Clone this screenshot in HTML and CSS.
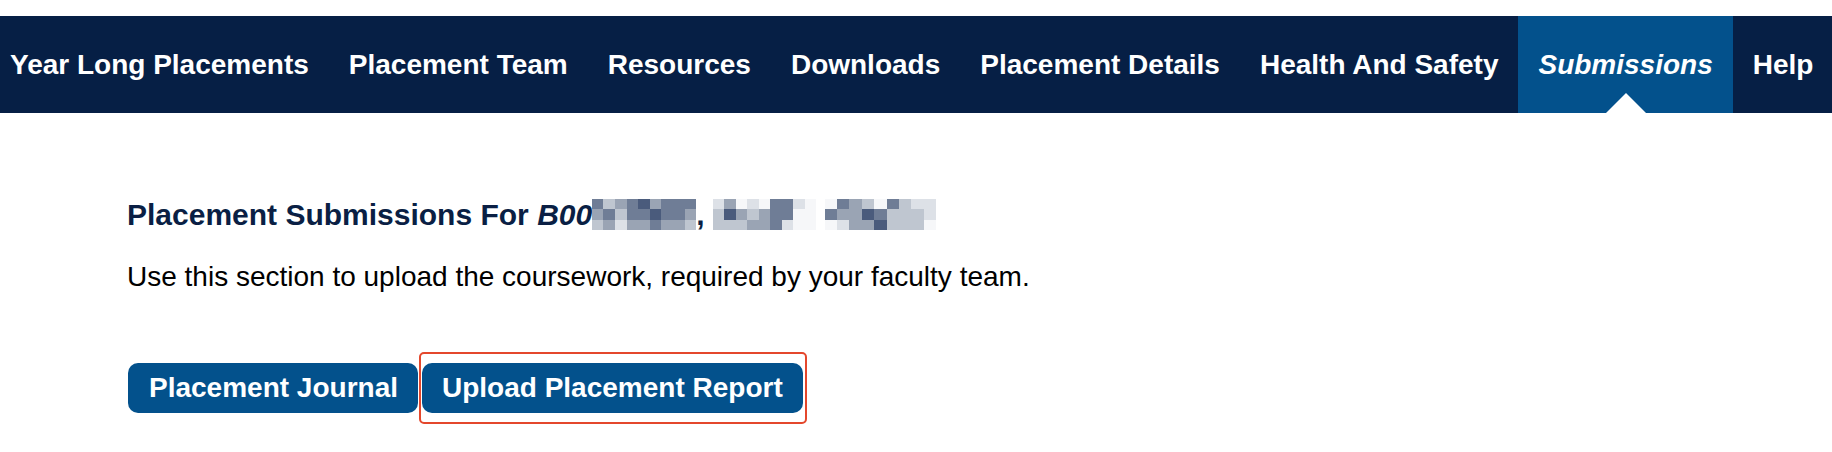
FILE: index.html
```html
<!DOCTYPE html>
<html lang="en">
<head>
<meta charset="utf-8">
<title>Placement Submissions</title>
<link rel="stylesheet" href="styles.css">
</head>
<body>
<div class="page">
  <nav class="topnav">
    <a class="nav-item first" href="#">Year Long Placements</a>
    <a class="nav-item" href="#">Placement Team</a>
    <a class="nav-item" href="#">Resources</a>
    <a class="nav-item" href="#">Downloads</a>
    <a class="nav-item" href="#">Placement Details</a>
    <a class="nav-item" href="#">Health And Safety</a>
    <a class="nav-item active" href="#">Submissions</a>
    <a class="nav-item" href="#">Help</a>
  </nav>
  <main class="content">
    <h1 class="title">Placement Submissions For <em class="sid">B001</em><span class="mosaic overlap"><span class="cells m-a">
      <i class="c4"></i><i class="c2"></i><i class="c3"></i><i class="c4"></i><i class="c5"></i><i class="c3"></i><i class="c4"></i><i class="c4"></i><i class="c4"></i>
      <i class="c3"></i><i class="c4"></i><i class="c2"></i><i class="c4"></i><i class="c4"></i><i class="c5"></i><i class="c4"></i><i class="c4"></i><i class="c3"></i>
      <i class="c2"></i><i class="c3"></i><i class="c1"></i><i class="c3"></i><i class="c3"></i><i class="c4"></i><i class="c3"></i><i class="c3"></i><i class="c2"></i>
    </span></span>, <span class="mosaic"><span class="cells m-b">
      <i class="c1"></i><i class="c3"></i><i class="c0"></i><i class="c1"></i><i class="c0"></i><i class="c4"></i><i class="c4"></i><i class="c1"></i><i class="c0"></i>
      <i class="c2"></i><i class="c5"></i><i class="c3"></i><i class="c2"></i><i class="c3"></i><i class="c4"></i><i class="c4"></i><i class="c0"></i><i class="c0"></i>
      <i class="c2"></i><i class="c2"></i><i class="c2"></i><i class="c3"></i><i class="c3"></i><i class="c4"></i><i class="c1"></i><i class="c0"></i><i class="c0"></i>
    </span></span> <span class="mosaic"><span class="cells m-c">
      <i class="c0"></i><i class="c4"></i><i class="c3"></i><i class="c2"></i><i class="c0"></i><i class="c4"></i><i class="c2"></i><i class="c1"></i><i class="c1"></i>
      <i class="c4"></i><i class="c3"></i><i class="c3"></i><i class="c5"></i><i class="c4"></i><i class="c2"></i><i class="c2"></i><i class="c2"></i><i class="c1"></i>
      <i class="c0"></i><i class="c1"></i><i class="c3"></i><i class="c3"></i><i class="c5"></i><i class="c2"></i><i class="c2"></i><i class="c2"></i><i class="c0"></i>
    </span></span></h1>
    <p class="lead">Use this section to upload the coursework, required by your faculty team.</p>
    <div class="actions">
      <a class="btn" href="#">Placement Journal</a>
      <span class="highlight-frame"><a class="btn" href="#">Upload Placement Report</a></span>
    </div>
  </main>
</div>
</body>
</html>
```

FILE: styles.css
```css
html, body {
  margin: 0;
  padding: 0;
  background: #ffffff;
}

.page {
  padding-top: 16px;
  padding-bottom: 40px;
  font-family: "Liberation Sans", Arial, Helvetica, sans-serif;
}

.topnav {
  display: flex;
  align-items: stretch;
  height: 97px;
  background: #061f45;
}

.nav-item {
  display: flex;
  align-items: center;
  padding: 0 20px;
  color: #ffffff;
  font-size: 28px;
  font-weight: bold;
  line-height: 32px;
  text-decoration: none;
  white-space: nowrap;
}

.nav-item.first {
  padding-left: 10px;
}

.nav-item.active {
  position: relative;
  background: #03518c;
  font-style: italic;
}

.nav-item.active::after {
  content: "";
  position: absolute;
  left: 50%;
  bottom: 0;
  margin-left: -20px;
  border-left: 20px solid transparent;
  border-right: 20px solid transparent;
  border-bottom: 20px solid #ffffff;
}

.content {
  padding-left: 127px;
}

.title {
  margin: 85px 0 0 0;
  color: #0a1f44;
  font-size: 30px;
  font-weight: bold;
  line-height: 34px;
  white-space: nowrap;
}

.sid {
  font-style: italic;
}

.mosaic {
  display: inline-block;
  overflow: hidden;
  vertical-align: -5px;
}

.mosaic.overlap {
  position: relative;
  margin-left: -17px;
}

.cells {
  display: grid;
  grid-template-columns: repeat(9, 12.4px);
  grid-auto-rows: 10.3px;
}

.cells i {
  display: block;
}

.m-a { grid-template-columns: repeat(9, 11.6px); }
.m-b { grid-template-columns: repeat(9, 11.5px); }
.m-c { grid-template-columns: repeat(9, 12.4px); }

.c0 { background: #f6f7f9; }
.c1 { background: #dde1e7; }
.c2 { background: #bfc6d0; }
.c3 { background: #9aa4b4; }
.c4 { background: #6f7d96; }
.c5 { background: #4a5b7c; }

.lead {
  margin: 29px 0 0 0;
  color: #000000;
  font-size: 28px;
  line-height: 32px;
}

.actions {
  display: flex;
  align-items: flex-start;
  gap: 4px;
  margin-top: 70px;
  padding-left: 1px;
}

.btn {
  display: flex;
  align-items: center;
  height: 50px;
  padding: 0 20px 0 21px;
  background: #03518c;
  border-radius: 10px;
  color: #ffffff;
  font-size: 28px;
  font-weight: bold;
  text-decoration: none;
  white-space: nowrap;
}

.highlight-frame {
  display: flex;
  margin: -11px -4px -11px -3px;
  padding: 9px 2px 9px 1px;
  border: 2px solid #e4472c;
  border-radius: 5px;
}

.highlight-frame .btn {
  padding: 0 20px;
}
```
